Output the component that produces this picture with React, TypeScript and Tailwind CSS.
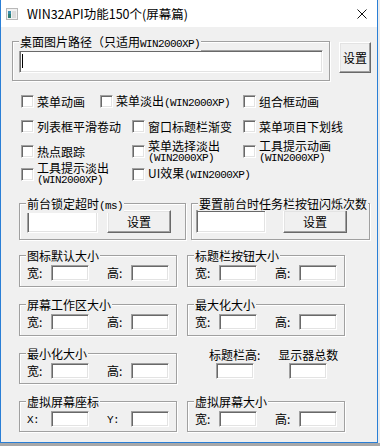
import type { ReactNode } from "react";

// classic win32 bevels
const sunken =
  "bg-white border border-t-[#a0a0a0] border-l-[#a0a0a0] border-b-white border-r-white shadow-[inset_1px_1px_0_#696969,inset_-1px_-1px_0_#e3e3e3]";
const raised =
  "bg-[#f0f0f0] border border-t-white border-l-white border-r-[#696969] border-b-[#696969] shadow-[inset_-1px_-1px_0_#a0a0a0,inset_1px_1px_0_#e3e3e3]";

function A({ children, block }: { children: ReactNode; block?: boolean }) {
  return (
    <span className={`${block ? "block h-[12px]" : ""} font-['Liberation_Mono',monospace] text-[11px] tracking-[-0.6px]`}>
      {children}
    </span>
  );
}

function Group({ title, className, children }: { title: ReactNode; className: string; children?: ReactNode }) {
  return (
    <div className={`relative border border-[#a0a0a0] shadow-[inset_1px_1px_0_#fff,1px_1px_0_#fff] ${className}`}>
      <span className="absolute -top-[7px] left-[6px] bg-[#f0f0f0] px-px leading-[14px] whitespace-nowrap">{title}</span>
      {children}
    </div>
  );
}

function Check({ className, children }: { className: string; children: ReactNode }) {
  return (
    <div className={`flex items-center gap-[3px] ${className}`}>
      <span className={`w-[13px] h-[13px] shrink-0 ${sunken}`} />
      <div className="flex flex-col leading-[12px] whitespace-nowrap">{children}</div>
    </div>
  );
}

function Btn({ className }: { className: string }) {
  return <button type="button" className={`flex items-center justify-center leading-[12px] ${raised} ${className}`}>设置</button>;
}

// 宽/高 pair used by all the size boxes
function SizeRow({ a = "宽:", b = "高:" }: { a?: ReactNode; b?: ReactNode }) {
  return (
    <div className="flex items-center pl-[7px] pt-[9px]">
      <span className="w-[24px] leading-[12px]">{a}</span>
      <span className={`w-[38px] h-[16px] ${sunken}`} />
      <span className="ml-[18px] w-[24px] leading-[12px]">{b}</span>
      <span className={`w-[38px] h-[16px] ${sunken}`} />
    </div>
  );
}

export default function App() {
  return (
    <div className="w-[380px] h-[446px] bg-[#ececec] font-['Noto_Sans_CJK_SC',sans-serif] text-[12px] text-black">
      <div className="w-[378px] h-[443px] bg-[#f0f0f0] border-x border-b border-[#2a7fd6] flex flex-col">
        {/* title bar */}
        <div className="h-[27px] bg-white flex items-center pl-[5px] pr-[10px] shrink-0">
          <svg width="12" height="12" viewBox="0 0 12 12" aria-hidden>
            <rect x="0" y="0" width="12" height="12" fill="#b8b8b8" />
            <rect x="1" y="1" width="10" height="10" fill="#f2f2f2" />
            <rect x="2" y="3" width="3" height="7" fill="#2f7e74" />
            <rect x="2" y="3" width="3" height="3" fill="#3c8fb0" />
            <rect x="6" y="3" width="4" height="7" fill="#dcdcdc" />
          </svg>
          <span className="ml-[9px] leading-[14px] text-[12.5px]">WIN32API功能150个(屏幕篇)</span>
          <svg className="ml-auto" width="10" height="10" viewBox="0 0 10 10" aria-hidden>
            <path d="M0.5 0.5L9.5 9.5M9.5 0.5L0.5 9.5" stroke="#111" strokeWidth="1" />
          </svg>
        </div>

        {/* wallpaper path */}
        <div className="flex items-start ml-[11px] mt-[14px]">
          <Group className="w-[318px] h-[40px]" title={<>桌面图片路径（只适用<A>WIN2000XP)</A></>}>
            <div className={`ml-[6px] mt-[8px] w-[304px] h-[23px] ${sunken}`}>
              <span className="block ml-[2px] mt-[3px] w-px h-[14px] bg-black" />
            </div>
          </Group>
          <Btn className="ml-[9px] mt-px w-[32px] h-[31px]" />
        </div>

        {/* checkboxes */}
        <div className="mt-[8px] flex flex-col">
          <div className="h-[25px] flex items-center pl-[20px]">
            <Check className="w-[79px]">菜单动画</Check>
            <Check className="w-[143px]"><span>菜单淡出<A>(WIN2000XP)</A></span></Check>
            <Check className="">组合框动画</Check>
          </div>
          <div className="h-[25px] flex items-center pl-[20px]">
            <Check className="w-[111px]">列表框平滑卷动</Check>
            <Check className="w-[111px]">窗口标题栏渐变</Check>
            <Check className="">菜单项目下划线</Check>
          </div>
          <div className="h-[25px] flex items-center pl-[20px]">
            <Check className="w-[111px]">热点跟踪</Check>
            <Check className="w-[111px]"><span className="block h-[12px]">菜单选择淡出</span><A block>(WIN2000XP)</A></Check>
            <Check className=""><span className="block h-[12px]">工具提示动画</span><A block>(WIN2000XP)</A></Check>
          </div>
          <div className="h-[20px] flex items-center pl-[20px]">
            <Check className="w-[111px]"><span className="block h-[12px]">工具提示淡出</span><A block>(WIN2000XP)</A></Check>
            <Check className=""><span>UI效果<A>(WIN2000XP)</A></span></Check>
          </div>
        </div>

        {/* lock timeout / flash count */}
        <div className="flex ml-[18px] mt-[19px] gap-[5px]">
          <Group className="w-[167px] h-[37px]" title={<>前台锁定超时<A>(ms)</A></>}>
            <div className="flex pl-[7px] pt-[6px]">
              <span className={`w-[71px] h-[23px] ${sunken}`} />
              <Btn className="ml-[9px] w-[64px] h-[23px]" />
            </div>
          </Group>
          <Group className="w-[179px] h-[37px]" title="要置前台时任务栏按钮闪烁次数">
            <div className="flex pl-[4px] pt-[6px]">
              <span className={`w-[70px] h-[23px] ${sunken}`} />
              <Btn className="ml-[17px] w-[64px] h-[23px]" />
            </div>
          </Group>
        </div>

        {/* size boxes */}
        <div className="grid grid-cols-[158px_158px] gap-x-[10px] gap-y-[17px] ml-[18px] mt-[15px]">
          <Group className="h-[32px]" title="图标默认大小"><SizeRow /></Group>
          <Group className="h-[32px]" title="标题栏按钮大小"><SizeRow /></Group>
          <Group className="h-[32px]" title="屏幕工作区大小"><SizeRow /></Group>
          <Group className="h-[32px]" title="最大化大小"><SizeRow /></Group>
          <Group className="h-[31px]" title="最小化大小"><SizeRow /></Group>
          <div className="h-[31px] flex">
            <div className="ml-[11px] w-[80px] flex flex-col items-center">
              <span className="-mt-[4px] leading-[12px]">标题栏高:</span>
              <span className={`mt-[2px] w-[38px] h-[16px] ${sunken}`} />
            </div>
            <div className="w-[80px] flex flex-col items-center">
              <span className="-mt-[4px] leading-[12px]">显示器总数</span>
              <span className={`mt-[2px] w-[38px] h-[16px] ${sunken}`} />
            </div>
          </div>
          <Group className="h-[31px]" title="虚拟屏幕座标"><SizeRow a={<A>X:</A>} b={<A>Y:</A>} /></Group>
          <Group className="h-[31px]" title="虚拟屏幕大小"><SizeRow /></Group>
        </div>
      </div>
      <div className="h-[3px] bg-[#a8a8a8]" />
    </div>
  );
}
